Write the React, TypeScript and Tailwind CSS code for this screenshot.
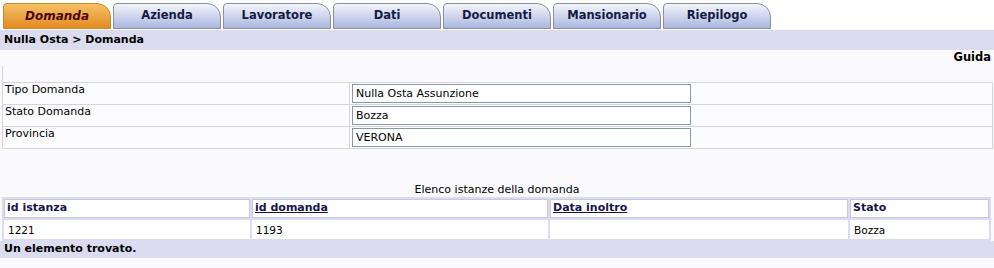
import React from "react";

const tabs = ["Domanda", "Azienda", "Lavoratore", "Dati", "Documenti", "Mansionario", "Riepilogo"];

const fields = [
  { label: "Tipo Domanda", value: "Nulla Osta Assunzione" },
  { label: "Stato Domanda", value: "Bozza" },
  { label: "Provincia", value: "VERONA" }
];

export default function App() {
  return (
    <div className="h-[268px] w-[994px] overflow-hidden bg-[#fafafc] text-[11px] text-black font-['DejaVu_Sans',Verdana,sans-serif]">
      {/* tabs */}
      <div className="flex h-[29px] items-end gap-[2px] bg-white pl-[3px]">
        {tabs.map((t, i) =>
          i === 0 ? (
            <div
              key={t}
              className="flex h-[26px] w-[108px] items-center justify-center rounded-tl-[4px] rounded-tr-[14px] border border-[#c98a2a] bg-gradient-to-b from-[#f6c263] to-[#e28a1e] text-[12px] font-bold italic text-[#4a0808]"
            >
              {t}
            </div>
          ) : (
            <div
              key={t}
              className="flex h-[26px] w-[108px] items-center justify-center rounded-tl-[4px] rounded-tr-[14px] border border-[#8a8f9e] bg-gradient-to-b from-[#f4f5fb] to-[#aab6de] text-[11.5px] font-bold text-[#151a45]"
            >
              {t}
            </div>
          )
        )}
      </div>

      {/* breadcrumb */}
      <div className="mt-[1px] flex h-[20px] items-center bg-[#dcdcf0] pl-[4px] pt-[1px] font-bold">Nulla Osta &gt; Domanda</div>

      <div className="flex h-[16px] items-center justify-end pr-[3px] text-[11.5px] font-bold">Guida</div>

      <div className="ml-[2px] h-[16px] border-l border-[#d4d4dc]" />

      {/* form */}
      <table className="ml-[2px] w-[991px] border-collapse">
        <tbody>
          {fields.map((f) => (
            <tr key={f.label} className="h-[22px]">
              <td className="w-[347px] border border-[#d4d4dc] bg-[#fcfcfe] px-[2px] pb-[5px] align-top leading-[14px]">
                {f.label}
              </td>
              <td className="border border-[#d4d4dc] bg-[#fcfcfe] px-[2px] align-middle">
                <div className="flex h-[19px] w-[339px] items-center border border-[#8799a8] bg-white pl-[3px] pt-[1px] text-[11px]">
                  {f.value}
                </div>
              </td>
            </tr>
          ))}
        </tbody>
      </table>

      <div className="h-[33px]" />

      {/* list */}
      <div className="text-center leading-[15px]">Elenco istanze della domanda</div>
      <table className="ml-[2px] w-[989px] border-separate border-spacing-[2px] bg-[#dcdcf0]">
        <thead>
          <tr className="h-[18px]">
            <th className="w-[246px] border border-[#c8c8d8] bg-white px-[2px] text-left text-[11px] font-bold text-[#15154a]">
              id istanza
            </th>
            <th className="w-[296px] border border-[#c8c8d8] bg-white px-[2px] text-left text-[11px] font-bold text-[#15154a] underline">
              id domanda
            </th>
            <th className="w-[298px] border border-[#c8c8d8] bg-white px-[2px] text-left text-[11px] font-bold text-[#15154a] underline">
              Data inoltro
            </th>
            <th className="border border-[#c8c8d8] bg-white px-[2px] text-left text-[11px] font-bold text-[#15154a]">
              Stato
            </th>
          </tr>
        </thead>
        <tbody>
          <tr className="h-[19px]">
            <td className="bg-white px-[4px] pt-[3px] text-[10.5px]">1221</td>
            <td className="bg-white px-[4px] pt-[3px] text-[10.5px]">1193</td>
            <td className="bg-white px-[4px] pt-[3px] text-[10.5px]"></td>
            <td className="bg-white px-[4px] pt-[3px] text-[10.5px]">Bozza</td>
          </tr>
        </tbody>
      </table>
      <div className="flex h-[17px] items-center bg-[#dcdcf0] pl-[4px] font-bold">Un elemento trovato.</div>
    </div>
  );
}
